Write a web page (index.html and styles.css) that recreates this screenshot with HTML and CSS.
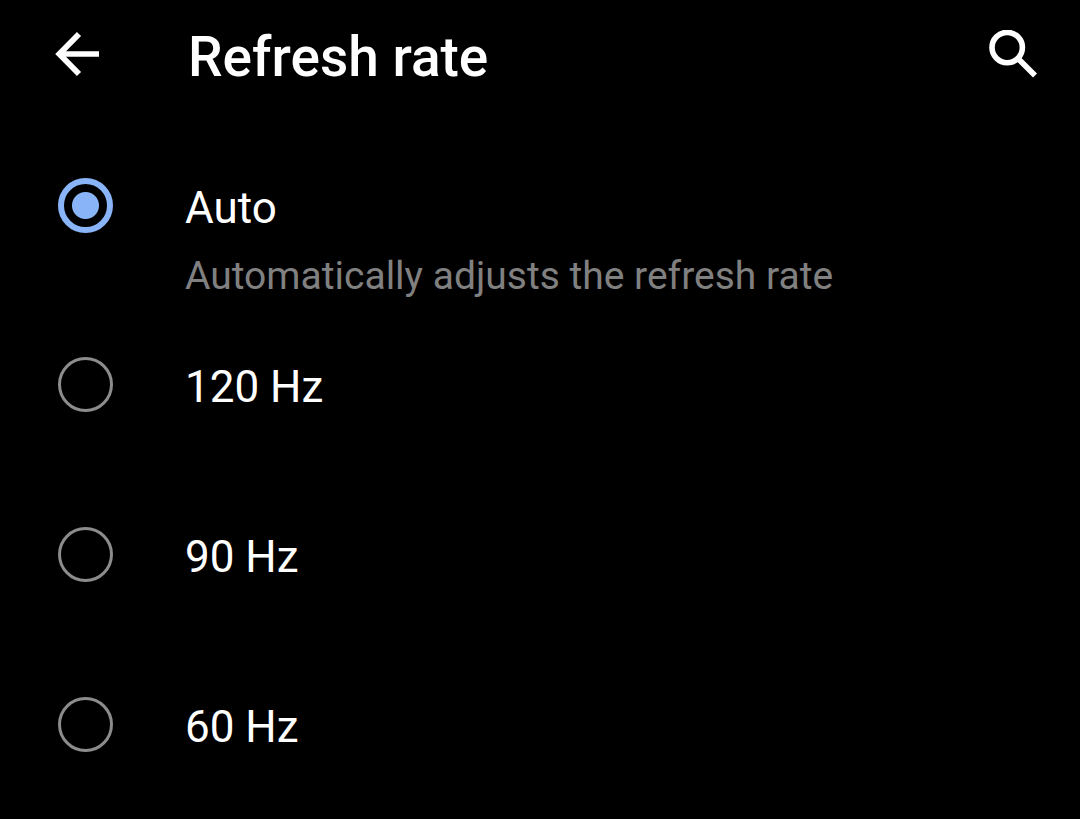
FILE: index.html
```html
<!DOCTYPE html>
<html lang="en">

<head>
    <meta charset="UTF-8">
    <meta name="viewport" content="width=device-width, initial-scale=1.0">
    <title>Refresh rate</title>
    <link rel="stylesheet" href="styles.css">
</head>

<body>
    <header class="top-bar">
        <button type="button" class="icon-btn back-btn" aria-label="Back">
            <svg viewBox="0 0 44 48" fill="none" stroke="#ffffff">
                <path d="M44 24H5" stroke-width="5.4" />
                <path d="M24 4L4.3 24L24 44" stroke-width="5.8" />
            </svg>
        </button>
        <h1>Refresh rate</h1>
        <button type="button" class="icon-btn search-btn" aria-label="Search">
            <svg viewBox="0 0 48 48" fill="none" stroke="#ffffff">
                <circle cx="18.2" cy="17.6" r="15.2" stroke-width="5.6" />
                <path d="M28.5 28L46 45.5" stroke-width="5.6" />
            </svg>
        </button>
    </header>

    <main>
        <form class="options">
            <label class="option">
                <input type="radio" name="rate" value="auto" checked>
                <span class="option-text">
                    <span class="option-title">Auto</span>
                    <span class="option-summary">Automatically adjusts the refresh rate</span>
                </span>
            </label>
            <label class="option">
                <input type="radio" name="rate" value="120">
                <span class="option-title">120 Hz</span>
            </label>
            <label class="option">
                <input type="radio" name="rate" value="90">
                <span class="option-title">90 Hz</span>
            </label>
            <label class="option">
                <input type="radio" name="rate" value="60">
                <span class="option-title">60 Hz</span>
            </label>
        </form>
    </main>
</body>

</html>
```

FILE: styles.css
```css
* {
    box-sizing: border-box;
}

body {
    margin: 0;
    background-color: #000000;
    color: #ffffff;
    font-family: Roboto, sans-serif;
}

.top-bar {
    display: flex;
    align-items: flex-start;
    padding: 30px 43px 0 55px;
}

h1 {
    flex: 1;
    margin: 0;
    font-size: 55px;
    font-weight: 500;
    line-height: 54px;
}

.icon-btn {
    height: 48px;
    padding: 0;
    border: none;
    background: none;
    cursor: pointer;
}

.icon-btn svg {
    display: block;
    width: 100%;
    height: 100%;
}

.back-btn {
    width: 44px;
    margin-right: 89px;
}

.search-btn {
    width: 48px;
}

.options {
    display: flex;
    flex-direction: column;
    padding: 94px 58px 24px;
}

.option {
    display: flex;
    align-items: flex-start;
    gap: 72px;
    min-height: 170px;
    cursor: pointer;
}

.option:last-child {
    min-height: 60px;
}

.option input {
    flex: none;
    appearance: none;
    width: 55px;
    height: 55px;
    margin: 0;
    border: 3px solid #8c8c8c;
    border-radius: 50%;
    cursor: pointer;
}

.option input:checked {
    border: 6px solid #8ab4f8;
    background: radial-gradient(circle, #8ab4f8 13px, transparent 14px);
}

.option-text {
    display: flex;
    flex-direction: column;
    gap: 10px;
    padding-bottom: 53px;
}

.option-title {
    font-size: 44px;
    line-height: 60px;
}

.option-summary {
    color: #808080;
    font-size: 39px;
    line-height: 56px;
}
```
